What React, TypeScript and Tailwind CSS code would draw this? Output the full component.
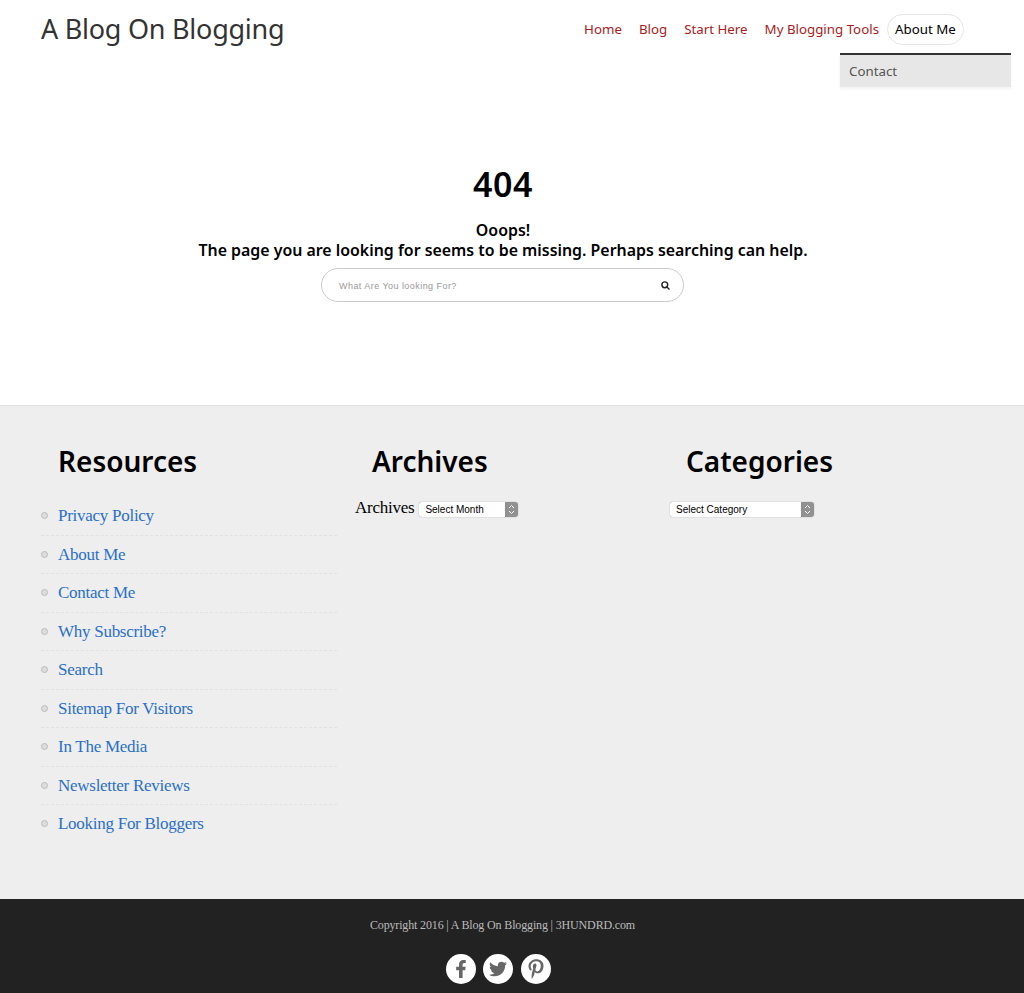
import { FaFacebookF, FaPinterestP, FaTwitter } from "react-icons/fa";

const sans = "font-['Noto_Sans',sans-serif]";
const serif = "font-['Liberation_Serif',serif]";

const navLinks = ["Home", "Blog", "Start Here", "My Blogging Tools"];

const resources = [
  "Privacy Policy",
  "About Me",
  "Contact Me",
  "Why Subscribe?",
  "Search",
  "Sitemap For Visitors",
  "In The Media",
  "Newsletter Reviews",
  "Looking For Bloggers",
];

function Stepper() {
  return (
    <span className="flex h-[15px] w-[13px] items-center justify-center rounded-r-[3px] bg-[#919191]">
      <svg width="7" height="11" viewBox="0 0 7 11" fill="none" stroke="#fff" strokeWidth="1">
        <path d="M1 4l2.5-2.5L6 4M1 7l2.5 2.5L6 7" />
      </svg>
    </span>
  );
}

function FakeSelect({ label, width }: { label: string; width: string }) {
  return (
    <div className={`mt-[5px] flex h-[15px] items-center justify-between rounded-[3px] bg-white shadow-[0_0_1px_rgba(0,0,0,0.5)] ${width}`}>
      <span className="pl-[6px] font-['Liberation_Sans',sans-serif] text-[10px] leading-[15px] text-black">{label}</span>
      <Stepper />
    </div>
  );
}

function Header() {
  return (
    <header className={`flex h-[88px] justify-between pl-[41px] pr-[13px] ${sans}`}>
      <a className="mt-[10px] text-[27px] leading-[38px] tracking-[-0.25px] text-[#333]">A Blog On Blogging</a>
      <nav className="relative mt-[14px] flex h-[31px] items-start">
        <div className="mr-2 flex gap-[17px]">
          {navLinks.map((link) => (
            <a key={link} className="text-[13.3px] leading-[30px] text-[#a81c1c]">
              {link}
            </a>
          ))}
        </div>
        <a className="mr-[47px] h-[31px] w-[77px] rounded-full border border-[#e6e6e6] text-center text-[13.3px] leading-[28px] text-black">About Me</a>
        <div className="absolute right-0 top-[39px] h-[34px] w-[171px] border-t-2 border-[#333] bg-[#e7e7e7] pl-[9px] text-[13.3px] leading-[33px] text-[#555] shadow-[0_2px_3px_rgba(0,0,0,0.05)]">
          Contact
        </div>
      </nav>
    </header>
  );
}

function NotFound() {
  return (
    <main className={`flex h-[317px] flex-col items-center pr-[18px] text-black ${sans}`}>
      <h1 className="mt-[76px] text-[34px] font-semibold leading-[40px] tracking-[0.5px]">404</h1>
      <p className="mt-[16px] text-[15.9px] font-semibold leading-[21px]">Ooops!</p>
      <p className="-mt-px text-[15.9px] font-semibold leading-[21px]">
        The page you are looking for seems to be missing. Perhaps searching can help.
      </p>
      <div className="mt-[7px] mr-px flex h-[34px] w-[363px] items-center justify-between rounded-full border border-[#ccc] bg-white pl-[17px] pr-[13px]">
        <span className="mt-[3px] font-['Liberation_Sans',sans-serif] text-[9px] tracking-[0.45px] text-[#999]">What Are You looking For?</span>
        <svg width="9" height="9" viewBox="0 0 10 10" fill="none" stroke="#222" strokeWidth="1.6">
          <circle cx="4.2" cy="4.2" r="3.2" />
          <path d="M6.6 6.6L9.4 9.4" />
        </svg>
      </div>
    </main>
  );
}

function Widgets() {
  return (
    <section className="flex h-[494px] border-t border-[#e0e0e0] bg-[#eeeeee] pl-[41px] pt-[35px]">
      <div className="w-[314px]">
        <h2 className={`pl-[17px] text-[28px] font-semibold leading-[40px] text-black ${sans}`}>Resources</h2>
        <ul className={`mt-[16px] w-[296px] ${serif}`}>
          {resources.map((item) => (
            <li key={item} className="relative h-[38.5px] border-b border-dashed border-[#e2e2e2] pl-[17px] text-[17px] leading-[38px] tracking-[-0.27px] text-[#2a6fc9] last:border-b-0">
              <span className="absolute left-0 top-[15px] h-[7px] w-[7px] rounded-full border border-[#bbb] bg-[#ddd]" />
              {item}
            </li>
          ))}
        </ul>
      </div>
      <div className="w-[314px]">
        <h2 className={`pl-[17px] text-[28px] font-semibold leading-[40px] text-black ${sans}`}>Archives</h2>
        <div className="mt-[16px] flex items-start gap-[5px]">
          <span className={`text-[17px] leading-[22px] tracking-[-0.25px] text-black ${serif}`}>Archives</span>
          <FakeSelect label="Select Month" width="w-[99px]" />
        </div>
      </div>
      <div className="w-[300px]">
        <h2 className={`pl-[17px] text-[28px] font-semibold leading-[40px] text-black ${sans}`}>Categories</h2>
        <div className="mt-[16px] flex h-[22px] items-start pl-px">
          <FakeSelect label="Select Category" width="w-[144px]" />
        </div>
      </div>
    </section>
  );
}

function Footer() {
  return (
    <footer className="flex h-[94px] flex-col items-center overflow-hidden bg-[#222] pr-[19px]">
      <p className={`mt-[18px] text-xs leading-4 tracking-[-0.15px] text-[#bbb] ${serif}`}>
        Copyright 2016 | A Blog On Blogging | 3HUNDRD.com
      </p>
      <div className="mt-[21px] mr-[9px] flex gap-[7.5px] text-[#666]">
        <span className="flex h-[30px] w-[30px] items-center justify-center rounded-full bg-white text-[18px]">
          <FaFacebookF />
        </span>
        <span className="flex h-[30px] w-[30px] items-center justify-center rounded-full bg-white text-[18px]">
          <FaTwitter />
        </span>
        <span className="flex h-[30px] w-[30px] items-center justify-center rounded-full bg-white text-[20px]">
          <FaPinterestP />
        </span>
      </div>
    </footer>
  );
}

export default function App() {
  return (
    <div className="h-[993px] overflow-hidden bg-white">
      <Header />
      <NotFound />
      <Widgets />
      <Footer />
    </div>
  );
}
